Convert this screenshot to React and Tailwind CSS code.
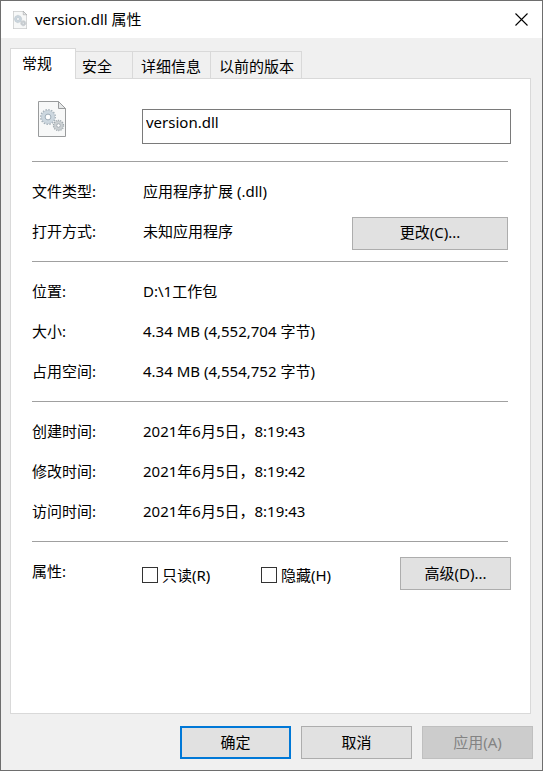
import { useState } from 'react'

const TABS = [
  { id: 'general', label: '常规', width: 'w-[66px]' },
  { id: 'security', label: '安全', width: 'w-[57px] pl-1.5' },
  { id: 'details', label: '详细信息', width: 'w-[78px] pl-2' },
  { id: 'previous', label: '以前的版本', width: 'w-[91px] pl-2' },
]

const LOCATION = [
  ['位置:', 'D:\\1工作包'],
  ['大小:', '4.34 MB (4,552,704 字节)'],
  ['占用空间:', '4.34 MB (4,554,752 字节)'],
]

const TIMES = [
  ['创建时间:', '2021年6月5日，8:19:43'],
  ['修改时间:', '2021年6月5日，8:19:42'],
  ['访问时间:', '2021年6月5日，8:19:43'],
]

function DllIcon({ className }) {
  return (
    <svg viewBox="0 0 28 36" fill="none" className={className} aria-hidden="true">
      <path d="M.5.5h20l7 7v28H.5z" fill="#f7f8f8" stroke="#999b9c" />
      <path d="M20.5.5v7h7z" fill="#e6e8e9" stroke="#999b9c" />
      <circle cx="10" cy="16" r="7.3" stroke="#a4b1ba" strokeWidth="1.4" strokeDasharray="1.5 1.37" />
      <circle cx="10" cy="16" r="4.8" stroke="#ccd7df" strokeWidth="3.6" />
      <circle cx="10" cy="16" r="6.6" stroke="#afbbc4" strokeWidth=".6" />
      <circle cx="10" cy="16" r="2.9" fill="#fff" stroke="#92a3af" strokeWidth=".9" />
      <circle cx="20.5" cy="24.5" r="5.1" stroke="#9ca5ab" strokeWidth="1.2" strokeDasharray="1.2 1.08" />
      <circle cx="20.5" cy="24.5" r="3.3" stroke="#cbd0d3" strokeWidth="2.8" />
      <circle cx="20.5" cy="24.5" r="4.6" stroke="#a9b0b5" strokeWidth=".5" />
      <circle cx="20.5" cy="24.5" r="1.8" fill="#fff" stroke="#929ca3" strokeWidth=".8" />
    </svg>
  )
}

function Button({ primary = false, className = '', ...props }) {
  return (
    <button
      type="button"
      className={`h-[33px] shrink-0 bg-[#e1e1e1] pb-0.5 leading-5 disabled:border-[#bfbfbf] disabled:bg-[#cccccc] disabled:text-[#838383] ${
        primary ? 'border-2 border-[#0078d7]' : 'border border-[#adadad]'
      } ${className}`}
      {...props}
    />
  )
}

function Row({ label, children }) {
  return (
    <div className="flex h-10 items-center">
      <dt className="w-[111px] shrink-0">{label}</dt>
      <dd className="flex-1">{children}</dd>
    </div>
  )
}

function Section({ children }) {
  return <dl className="mr-[3px] border-t border-[#a0a0a0] pt-[9px] pb-2.5">{children}</dl>
}

function Check({ label, className = '' }) {
  const [checked, setChecked] = useState(false)
  return (
    <label className={`flex items-center gap-1 ${className}`}>
      <input
        type="checkbox"
        checked={checked}
        onChange={e => setChecked(e.target.checked)}
        className="size-4 appearance-none border border-[#333333] bg-white checked:bg-[#333333]"
      />
      {label}
    </label>
  )
}

export default function App() {
  const [tab, setTab] = useState('general')
  const [name, setName] = useState('version.dll')

  return (
    <div className="flex min-h-screen flex-col border border-[#6e6e6e] bg-[#f0f0f0] font-['Noto_Sans','Noto_Sans_CJK_SC',sans-serif] text-[15px] leading-5 text-black">
      <header className="flex h-[37px] items-center bg-white pr-3.5 pl-3">
        <DllIcon className="h-[18px] w-3.5" />
        <h1 className="ml-2 flex-1 pb-0.5">version.dll 属性</h1>
        <button type="button" aria-label="关闭">
          <svg viewBox="0 0 13 13" className="size-[13px]" fill="none" stroke="currentColor" strokeWidth="1.1">
            <path d="M.5.5l12 12M12.5.5l-12 12" />
          </svg>
        </button>
      </header>

      <div role="tablist" className="flex items-end px-[9px] pt-2.5">
        {TABS.map(t => (
          <button
            key={t.id}
            type="button"
            role="tab"
            aria-selected={tab === t.id}
            onClick={() => setTab(t.id)}
            className={`border-[#d9d9d9] text-left whitespace-nowrap ${t.width} ${
              tab === t.id
                ? 'z-10 -mb-px h-[31px] border-x border-t bg-white pb-0.5 pl-[11px]'
                : 'h-[27px] border-t border-r pt-0.5'
            }`}
          >
            {t.label}
          </button>
        ))}
      </div>

      <main role="tabpanel" className="mr-[11px] ml-[9px] flex-1 border border-[#d9d9d9] bg-white pr-[19px] pl-[21px]">
        <div className="flex h-[82px] items-start">
          <div className="w-[110px] shrink-0 pt-[22px] pl-1.5">
            <DllIcon className="h-9 w-7" />
          </div>
          <input
            type="text"
            aria-label="文件名"
            value={name}
            onChange={e => setName(e.target.value)}
            className="mt-[30px] h-[35px] min-w-0 flex-1 border border-[#7a7a7a] bg-white px-[3px] pb-2.5 outline-none"
          />
        </div>

        <Section>
          <Row label="文件类型:">应用程序扩展 (.dll)</Row>
          <Row label="打开方式:">
            <div className="flex items-center justify-between">
              未知应用程序
              <Button className="mt-1 w-[156px]">更改(C)...</Button>
            </div>
          </Row>
        </Section>
        <Section>
          {LOCATION.map(([label, value]) => <Row key={label} label={label}>{value}</Row>)}
        </Section>
        <Section>
          {TIMES.map(([label, value]) => <Row key={label} label={label}>{value}</Row>)}
        </Section>

        <div className="mr-[3px] border-t border-[#a0a0a0]" />
        <div role="group" aria-labelledby="attributes" className="flex items-start pt-[15px]">
          <span id="attributes" className="w-[110px] shrink-0 pt-1">属性:</span>
          <Check label="只读(R)" className="w-[119px] pt-2" />
          <Check label="隐藏(H)" className="pt-2" />
          <Button className="ml-auto w-[111px]">高级(D)...</Button>
        </div>
      </main>

      <footer className="flex justify-end gap-2.5 pt-3 pr-[9px] pb-[11px]">
        <Button primary className="w-[111px]">确定</Button>
        <Button className="w-[111px]">取消</Button>
        <Button className="w-[111px]" disabled>应用(A)</Button>
      </footer>
    </div>
  )
}
